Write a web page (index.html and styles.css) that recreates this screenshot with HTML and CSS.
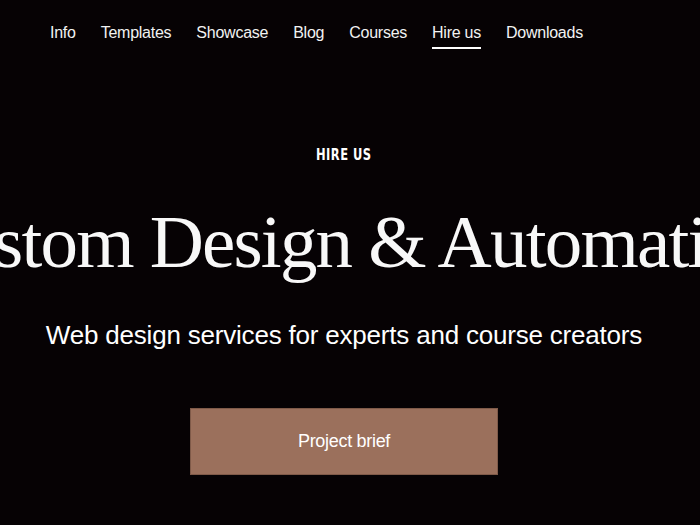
FILE: index.html
```html
<!DOCTYPE html>
<html lang="en">
<head>
<meta charset="utf-8">
<title>Hire us</title>
<link rel="stylesheet" href="styles.css">
</head>
<body>
<nav class="nav">
  <a class="nav-link" href="#">Info</a>
  <a class="nav-link" href="#">Templates</a>
  <a class="nav-link" href="#">Showcase</a>
  <a class="nav-link" href="#">Blog</a>
  <a class="nav-link" href="#">Courses</a>
  <a class="nav-link active" href="#">Hire us</a>
  <a class="nav-link" href="#">Downloads</a>
</nav>
<main class="hero">
  <p class="eyebrow">HIRE US</p>
  <div class="title-wrap"><h1 class="title">Custom Design &amp; Automation</h1></div>
  <p class="subtitle">Web design services for experts and course creators</p>
  <a class="button" href="#">Project brief</a>
</main>
</body>
</html>
```
FILE: styles.css
```css
* { box-sizing: border-box; }
html, body { margin: 0; padding: 0; background: #060204; color: #fff; overflow: hidden; }
body { width: 700px; height: 525px; font-family: "Liberation Sans", Arial, sans-serif; }
.nav {
  display: flex;
  gap: 25px;
  padding: 23px 0 0 50px;
  height: 60px;
}
.nav-link {
  color: #f2f2f2;
  text-decoration: none;
  font-size: 16px;
  line-height: 20px;
  height: 26px;
  letter-spacing: -0.25px;
  border-bottom: 2px solid transparent;
}
.nav-link.active { border-bottom-color: #fff; }
.hero {
  width: 688px;
  display: flex;
  flex-direction: column;
  align-items: center;
}
.eyebrow {
  margin: 85px 0 0;
  font-family: "DejaVu Sans Condensed", "DejaVu Sans", sans-serif;
  font-weight: bold;
  font-size: 16px;
  letter-spacing: 0.6px;
  line-height: 20px;
  transform: scaleX(0.8);
}
.title-wrap {
  width: 688px;
  display: flex;
  justify-content: center;
  margin-top: 32px;
}
.title {
  margin: 0;
  flex: none;
  white-space: nowrap;
  font-family: "Liberation Serif", "Times New Roman", serif;
  font-weight: normal;
  font-size: 75px;
  letter-spacing: -1.8px;
  line-height: 90px;
  color: #f8f8f8;
}
.subtitle {
  margin: 32px 0 0;
  font-size: 26px;
  line-height: 32px;
  letter-spacing: -0.2px;
}
.button {
  margin-top: 57px;
  width: 308px;
  height: 67px;
  display: flex;
  align-items: center;
  justify-content: center;
  background: #9b705c;
  border: 1px solid #7f5a49;
  color: #fff;
  text-decoration: none;
  font-size: 18px;
  letter-spacing: -0.3px;
}
```
